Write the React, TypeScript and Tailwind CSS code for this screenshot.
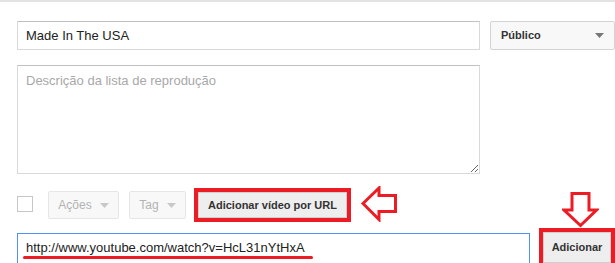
import React from "react";

const font = { fontFamily: '"Liberation Sans", Arial, sans-serif' };

function Caret({ color }: { color: string }) {
  return (
    <svg width="9" height="5" viewBox="0 0 9 5">
      <path d="M0 0 L9 0 L4.5 5 Z" fill={color} />
    </svg>
  );
}

function LeftArrow() {
  return (
    <svg width="37" height="36" viewBox="0 0 37 36">
      <path
        d="M2 17.5 L18 2 L18 9.5 L34.5 9.5 L34.5 25.5 L18 25.5 L18 33.5 Z"
        fill="white"
        stroke="#ed1c24"
        strokeWidth="3"
        strokeLinejoin="miter"
      />
    </svg>
  );
}

function DownArrow() {
  return (
    <svg width="37" height="36" viewBox="0 0 37 36">
      <path
        d="M10 1.5 L27 1.5 L27 18 L34.5 18 L18.5 33.5 L2 18 L10 18 Z"
        fill="white"
        stroke="#ed1c24"
        strokeWidth="3"
        strokeLinejoin="miter"
      />
    </svg>
  );
}

export default function App() {
  return (
    <div
      className="w-[615px] h-[263px] overflow-hidden bg-white text-[#333]"
      style={font}
    >
      <div className="h-[2px] bg-[#e3e3e3]" />

      {/* title + privacy */}
      <div className="flex items-start pl-[17px] mt-[19px]">
        <input
          defaultValue="Made In The USA"
          className="w-[463px] h-[29px] px-[8px] border border-[#d9d9d9] border-t-[#c0c0c0] text-[13px] text-[#222] outline-none"
          style={font}
        />
        <div className="ml-[10px] w-[125px] h-[29px] flex items-center justify-between pl-[10px] pr-[10px] bg-[#f8f8f8] border border-[#d3d3d3] rounded-[2px]">
          <span className="text-[11px] font-bold text-[#333]">Público</span>
          <Caret color="#777" />
        </div>
      </div>

      {/* description */}
      <div className="pl-[17px] mt-[15px]">
        <textarea
          placeholder="Descrição da lista de reprodução"
          className="block w-[463px] h-[109px] px-[8px] pt-[5px] border border-[#d9d9d9] border-t-[#c0c0c0] text-[13px] outline-none placeholder:text-[#a8a8a8]"
          style={font}
        />
      </div>

      {/* actions row */}
      <div className="flex items-start pl-[17px] mt-[12px] h-[42px]">
        <div className="mt-[10px] w-[16px] h-[16px] border border-[#c6c6c6] bg-white" />
        <div className="ml-[15px] mt-[5px] w-[71px] h-[28px] flex items-center justify-center gap-[8px] bg-[#f8f8f8] border border-[#e6e6e6] rounded-[2px]">
          <span className="text-[12px] text-[#b3b3b3]">Ações</span>
          <Caret color="#c8c8c8" />
        </div>
        <div className="ml-[10px] mt-[5px] w-[57px] h-[28px] flex items-center justify-center gap-[8px] bg-[#f8f8f8] border border-[#e6e6e6] rounded-[2px]">
          <span className="text-[12px] text-[#b3b3b3]">Tag</span>
          <Caret color="#c8c8c8" />
        </div>
        <div className="ml-[8px] mt-[2px] w-[157px] h-[34px] border-[4px] border-[#ed1c24]">
          <div className="h-full flex items-center justify-center bg-[#eeeeee] border border-[#cfcfcf]">
            <span className="text-[11px] font-bold text-[#333]">Adicionar vídeo por URL</span>
          </div>
        </div>
        <div className="ml-[10px]">
          <LeftArrow />
        </div>
        <div className="ml-auto mr-[16px] mt-[6px]">
          <DownArrow />
        </div>
      </div>

      {/* url row */}
      <div className="flex items-start pl-[17px]">
        <div className="relative mt-[5px] w-[513px] h-[32px] border border-[#4d90fe] px-[8px] pt-[6px]">
          <span className="block text-[13px] leading-[15px] text-[#222]">
            http://www.youtube.com/watch?v=HcL31nYtHxA
          </span>
          <div className="absolute left-[5px] top-[22px] w-[290px] h-[3px] rounded-full bg-[#ed1c24]" />
        </div>
        <div className="ml-[9px] w-[76px] h-[38px] border-[4px] border-[#ed1c24]">
          <div className="h-[31px] flex items-center justify-center bg-[#eeeeee] border border-[#cfcfcf]">
            <span className="text-[11px] font-bold text-[#333]">Adicionar</span>
          </div>
        </div>
      </div>
    </div>
  );
}
